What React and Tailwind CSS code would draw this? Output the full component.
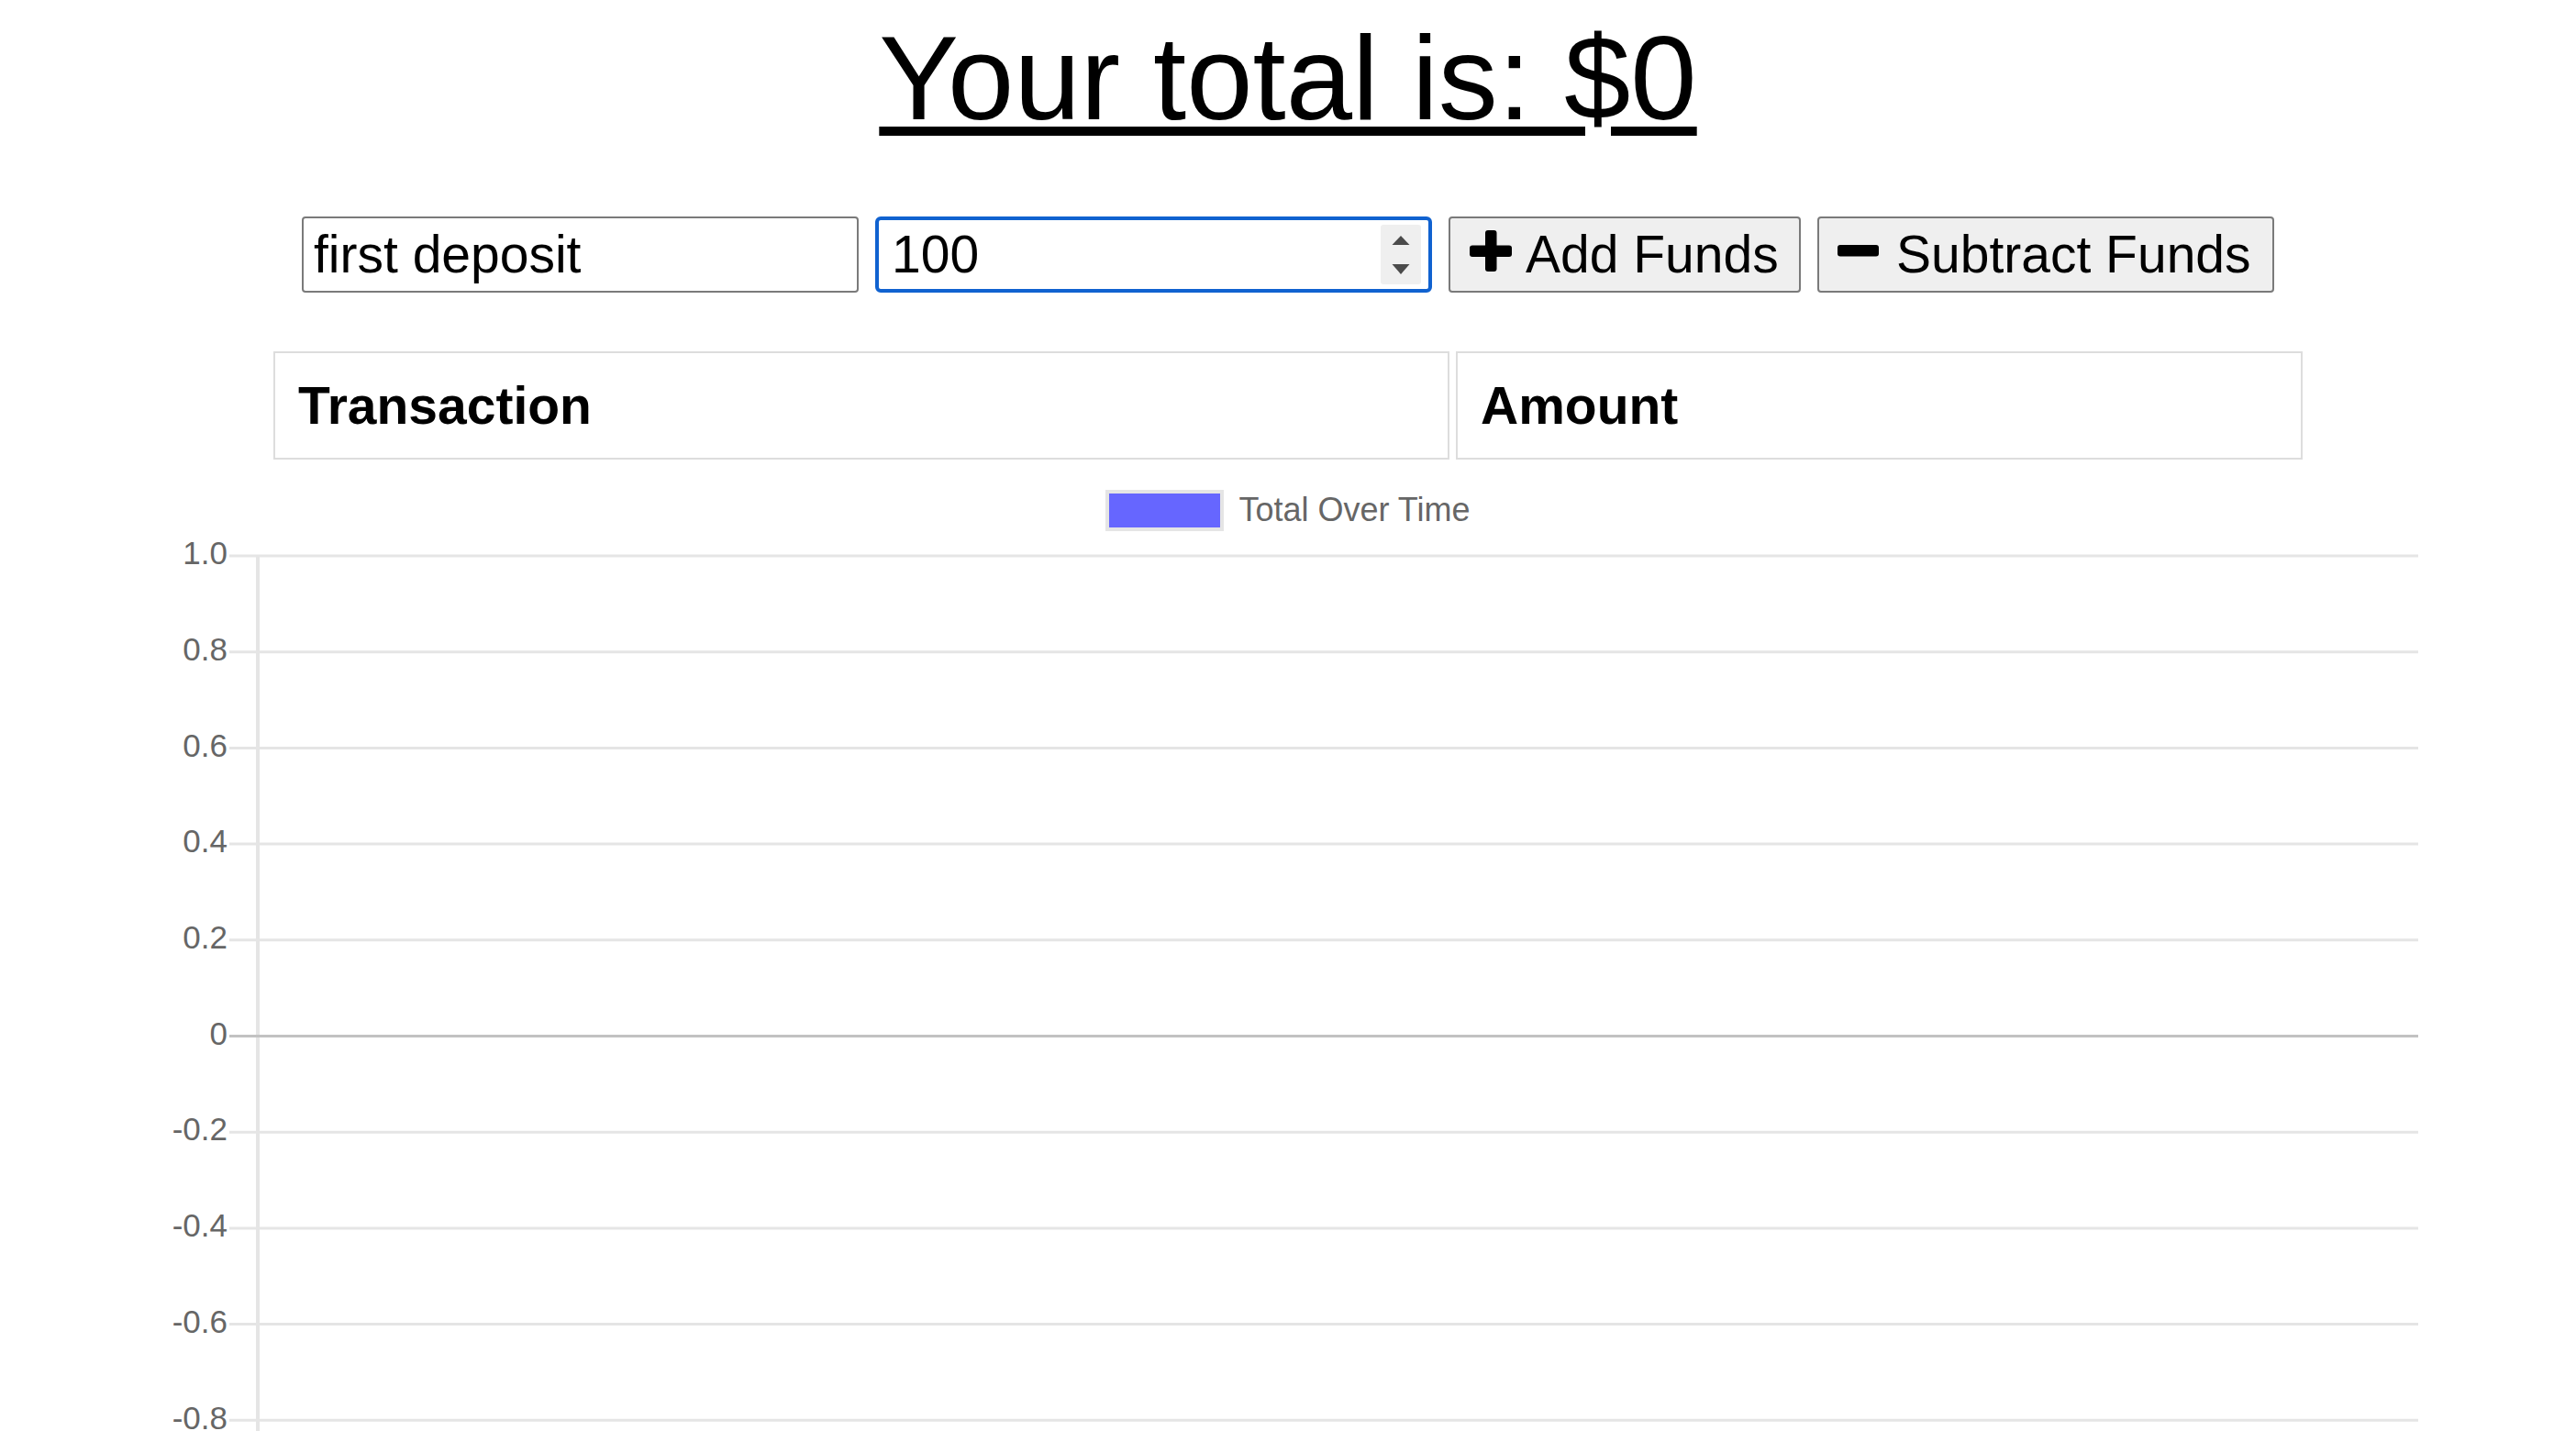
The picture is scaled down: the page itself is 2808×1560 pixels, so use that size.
const ticks = ["1.0", "0.8", "0.6", "0.4", "0.2", "0", "-0.2", "-0.4", "-0.6", "-0.8", "-1.0"];

function PlusIcon() {
  return (
    <svg width="46" height="45" viewBox="0 0 46 45" className="mb-[8px] shrink-0">
      <rect x="17" y="0" width="12.5" height="45" rx="3" fill="#000" />
      <rect x="0" y="16.5" width="46" height="12.5" rx="3" fill="#000" />
    </svg>
  );
}

function MinusIcon() {
  return (
    <svg width="45" height="13" viewBox="0 0 45 13" className="mb-[9px] shrink-0">
      <rect x="0" y="0" width="45" height="12.5" rx="3" fill="#000" />
    </svg>
  );
}

function Spinner() {
  return (
    <div className="w-[44px] h-[65px] bg-[#efefef] rounded-[3px] shrink-0">
      <svg width="44" height="65" viewBox="0 0 44 65">
        <polygon points="22,12 12.5,22 31.5,22" fill="#4b4b4b" />
        <polygon points="12.5,43 31.5,43 22,54" fill="#4b4b4b" />
      </svg>
    </div>
  );
}

function Chart() {
  const top = 23;
  const step = 104.7;
  return (
    <svg width="2808" height="1000" viewBox="0 0 2808 1000" className="block">
      <line x1="281" y1={top} x2="281" y2="1000" stroke="#e5e5e5" strokeWidth="4" />
      {ticks.map((t, i) => {
        const y = top + i * step;
        return (
          <g key={t}>
            <line x1="250" y1={y} x2="2636" y2={y} stroke={t === "0" ? "#c2c2c2" : "#e5e5e5"} strokeWidth="3" />
            <text
              x="248"
              y={y}
              textAnchor="end"
              dominantBaseline="middle"
              fontSize="35"
              fill="#666"
              fontFamily="Liberation Sans, Arial, sans-serif"
            >
              {t}
            </text>
          </g>
        );
      })}
    </svg>
  );
}

export default function App() {
  return (
    <div className="w-[2808px] h-[1560px] overflow-hidden bg-white text-black font-['Liberation_Sans',Arial,sans-serif]">
      <h1 className="pt-[11px] text-center text-[130px] leading-[149px] font-normal">
        <span className="underline decoration-[10px] underline-offset-[8px]">Your total is: $0</span>
      </h1>

      <div className="mt-[76px] flex justify-center items-center gap-[18px]">
        <input
          readOnly
          defaultValue="first deposit"
          className="w-[607px] h-[83px] border-2 border-[#7a7a7a] rounded-[4px] pl-[11px] text-[57px] outline-none bg-white"
        />
        <div className="w-[607px] h-[83px] border-4 border-[#1062d0] rounded-[6px] pl-[14px] pr-[8px] flex items-center bg-white">
          <input readOnly defaultValue="100" className="flex-1 min-w-0 text-[57px] outline-none bg-transparent" />
          <Spinner />
        </div>
        <button className="w-[384px] h-[83px] border-2 border-[#7a7a7a] rounded-[4px] bg-[#efefef] pl-[21px] flex items-center gap-[15px] text-[57px]">
          <PlusIcon />
          <span>Add Funds</span>
        </button>
        <button className="w-[498px] h-[83px] border-2 border-[#7a7a7a] rounded-[4px] bg-[#efefef] pl-[20px] flex items-center gap-[19px] text-[57px]">
          <MinusIcon />
          <span>Subtract Funds</span>
        </button>
      </div>

      <div className="mt-[64px] flex justify-center gap-[7px]">
        <div className="w-[1282px] border-2 border-[#dddddd] p-[25px] text-[57px] leading-[64px] font-bold">Transaction</div>
        <div className="w-[923px] border-2 border-[#dddddd] p-[25px] text-[57px] leading-[64px] font-bold">Amount</div>
      </div>

      <div className="mt-[28px] flex justify-center items-center gap-[16px]">
        <div className="w-[129px] h-[45px] border-4 border-[#e5e5e5] bg-[#6666ff]" />
        <span className="text-[36px] text-[#666666]">Total Over Time</span>
      </div>

      <Chart />
    </div>
  );
}
